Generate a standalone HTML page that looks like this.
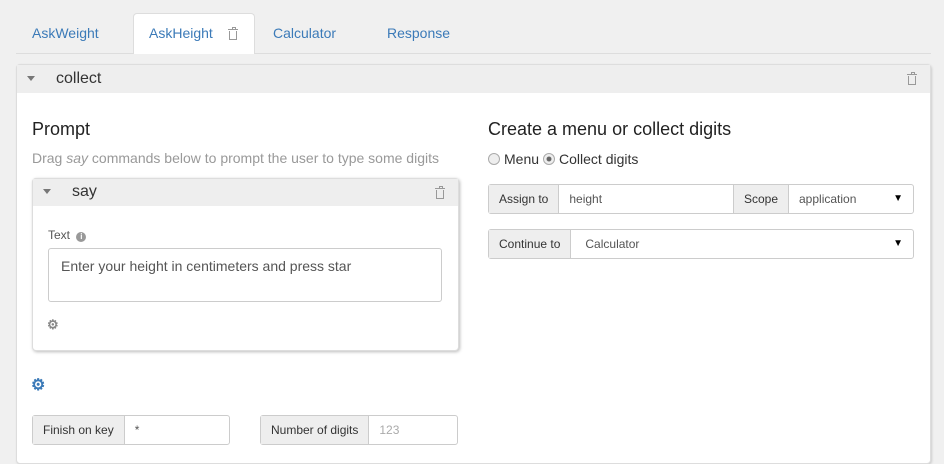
<!DOCTYPE html><html><head><style>
*{box-sizing:border-box}
body{margin:0;width:944px;height:460px;background:#f0f0f0;font-family:"Liberation Sans",sans-serif;position:relative;overflow:hidden;color:#333}
.a{position:absolute}
.tab{position:absolute;top:25px;font-size:14px;color:#3b7ab8}
.trash{display:inline-block;width:8px;height:9px;border:1.2px solid #999;border-top:none;position:relative;margin-top:3px}
.trash:before{content:"";position:absolute;left:-2px;top:-2px;width:10px;height:1.2px;background:#999}
.trash:after{content:"";position:absolute;left:2px;top:-4px;width:2px;height:2px;border:1px solid #999;border-bottom:none}
.caret{position:absolute;width:0;height:0;border-left:4px solid transparent;border-right:4px solid transparent;border-top:5px solid #777}
.grp{position:absolute;display:flex;border:1px solid #ccc;border-radius:3px;background:#fff;font-size:12px;height:30px}
.grp .l{background:#eee;border-right:1px solid #ccc;padding:0 10px;line-height:28px;color:#333}
.grp .v{padding:0 10px;line-height:28px;flex:1}
.gear{position:absolute;font-weight:bold}
</style></head><body>
<div class="a" style="left:16px;top:53px;width:915px;height:1px;background:#ddd"></div>
<div class="a" style="left:133px;top:13px;width:122px;height:41px;background:#fff;border:1px solid #ddd;border-bottom:none;border-radius:4px 4px 0 0"></div>
<div class="tab" style="left:32px">AskWeight</div>
<div class="tab" style="left:149px">AskHeight</div>
<div class="a" style="left:229px;top:27px"><span class="trash"></span></div>
<div class="tab" style="left:273px">Calculator</div>
<div class="tab" style="left:387px">Response</div>

<div class="a" style="left:16px;top:64px;width:915px;height:400px;background:#fff;border:1px solid #ddd;border-radius:4px;box-shadow:1px 1px 2px #ccc"></div>
<div class="a" style="left:17px;top:65px;width:913px;height:28px;background:#eee"></div>
<div class="caret" style="left:27px;top:76px"></div>
<div class="a" style="left:56px;top:70px;font-size:16px">collect</div>
<div class="a" style="left:908px;top:72px"><span class="trash"></span></div>

<div class="a" style="left:32px;top:119px;font-size:18px;color:#222">Prompt</div>
<div class="a" style="left:32px;top:150px;font-size:14px;color:#999">Drag <i>say</i> commands below to prompt the user to type some digits</div>

<div class="a" style="left:32px;top:178px;width:427px;height:173px;background:#fff;border:1px solid #ddd;border-radius:4px;box-shadow:1px 1px 3px #bbb"></div>
<div class="a" style="left:33px;top:179px;width:425px;height:27px;background:#eee"></div>
<div class="caret" style="left:43px;top:189px"></div>
<div class="a" style="left:72px;top:183px;font-size:16px">say</div>
<div class="a" style="left:436px;top:186px"><span class="trash"></span></div>
<div class="a" style="left:48px;top:228px;font-size:12px;color:#555">Text <span style="display:inline-block;width:10px;height:10px;border-radius:50%;background:#999;color:#fff;font-size:8px;text-align:center;line-height:10px;font-weight:bold;margin-left:3px">i</span></div>
<div class="a" style="left:48px;top:248px;width:394px;height:54px;border:1px solid #ccc;border-radius:3px;padding:9px 12px;font-size:14px;color:#555">Enter your height in centimeters and press star</div>
<div class="gear" style="left:47px;top:317px;color:#888;font-size:13px">⚙</div>
<div class="gear" style="left:31px;top:375px;color:#3b7ab8;font-size:16px">⚙</div>

<div class="grp" style="left:32px;top:415px;width:198px"><div class="l">Finish on key</div><div class="v" style="color:#555">*</div></div>
<div class="grp" style="left:260px;top:415px;width:198px"><div class="l">Number of digits</div><div class="v" style="color:#aaa">123</div></div>

<div class="a" style="left:488px;top:119px;font-size:18px;color:#222">Create a menu or collect digits</div>
<div class="a" style="left:488px;top:151px;font-size:14px;display:flex;align-items:center">
<span style="width:12px;height:12px;border-radius:50%;border:1px solid #aaa;background:#eee;margin-right:4px"></span>Menu
<span style="width:12px;height:12px;border-radius:50%;border:1px solid #aaa;background:radial-gradient(#666 30%,#eee 40%);margin:0 4px"></span>Collect digits</div>

<div class="grp" style="left:488px;top:184px;width:426px"><div class="l">Assign to</div><div class="v" style="color:#555">height</div><div class="l" style="border-left:1px solid #ccc">Scope</div><div class="v" style="width:124px;flex:none;display:flex;justify-content:space-between;color:#555"><span>application</span><span style="font-size:10px;color:#000">▼</span></div></div>
<div class="grp" style="left:488px;top:229px;width:426px"><div class="l">Continue to</div><div class="v" style="display:flex;justify-content:space-between;padding-left:14px;color:#555"><span>Calculator</span><span style="font-size:10px;color:#000">▼</span></div></div>
</body></html>
